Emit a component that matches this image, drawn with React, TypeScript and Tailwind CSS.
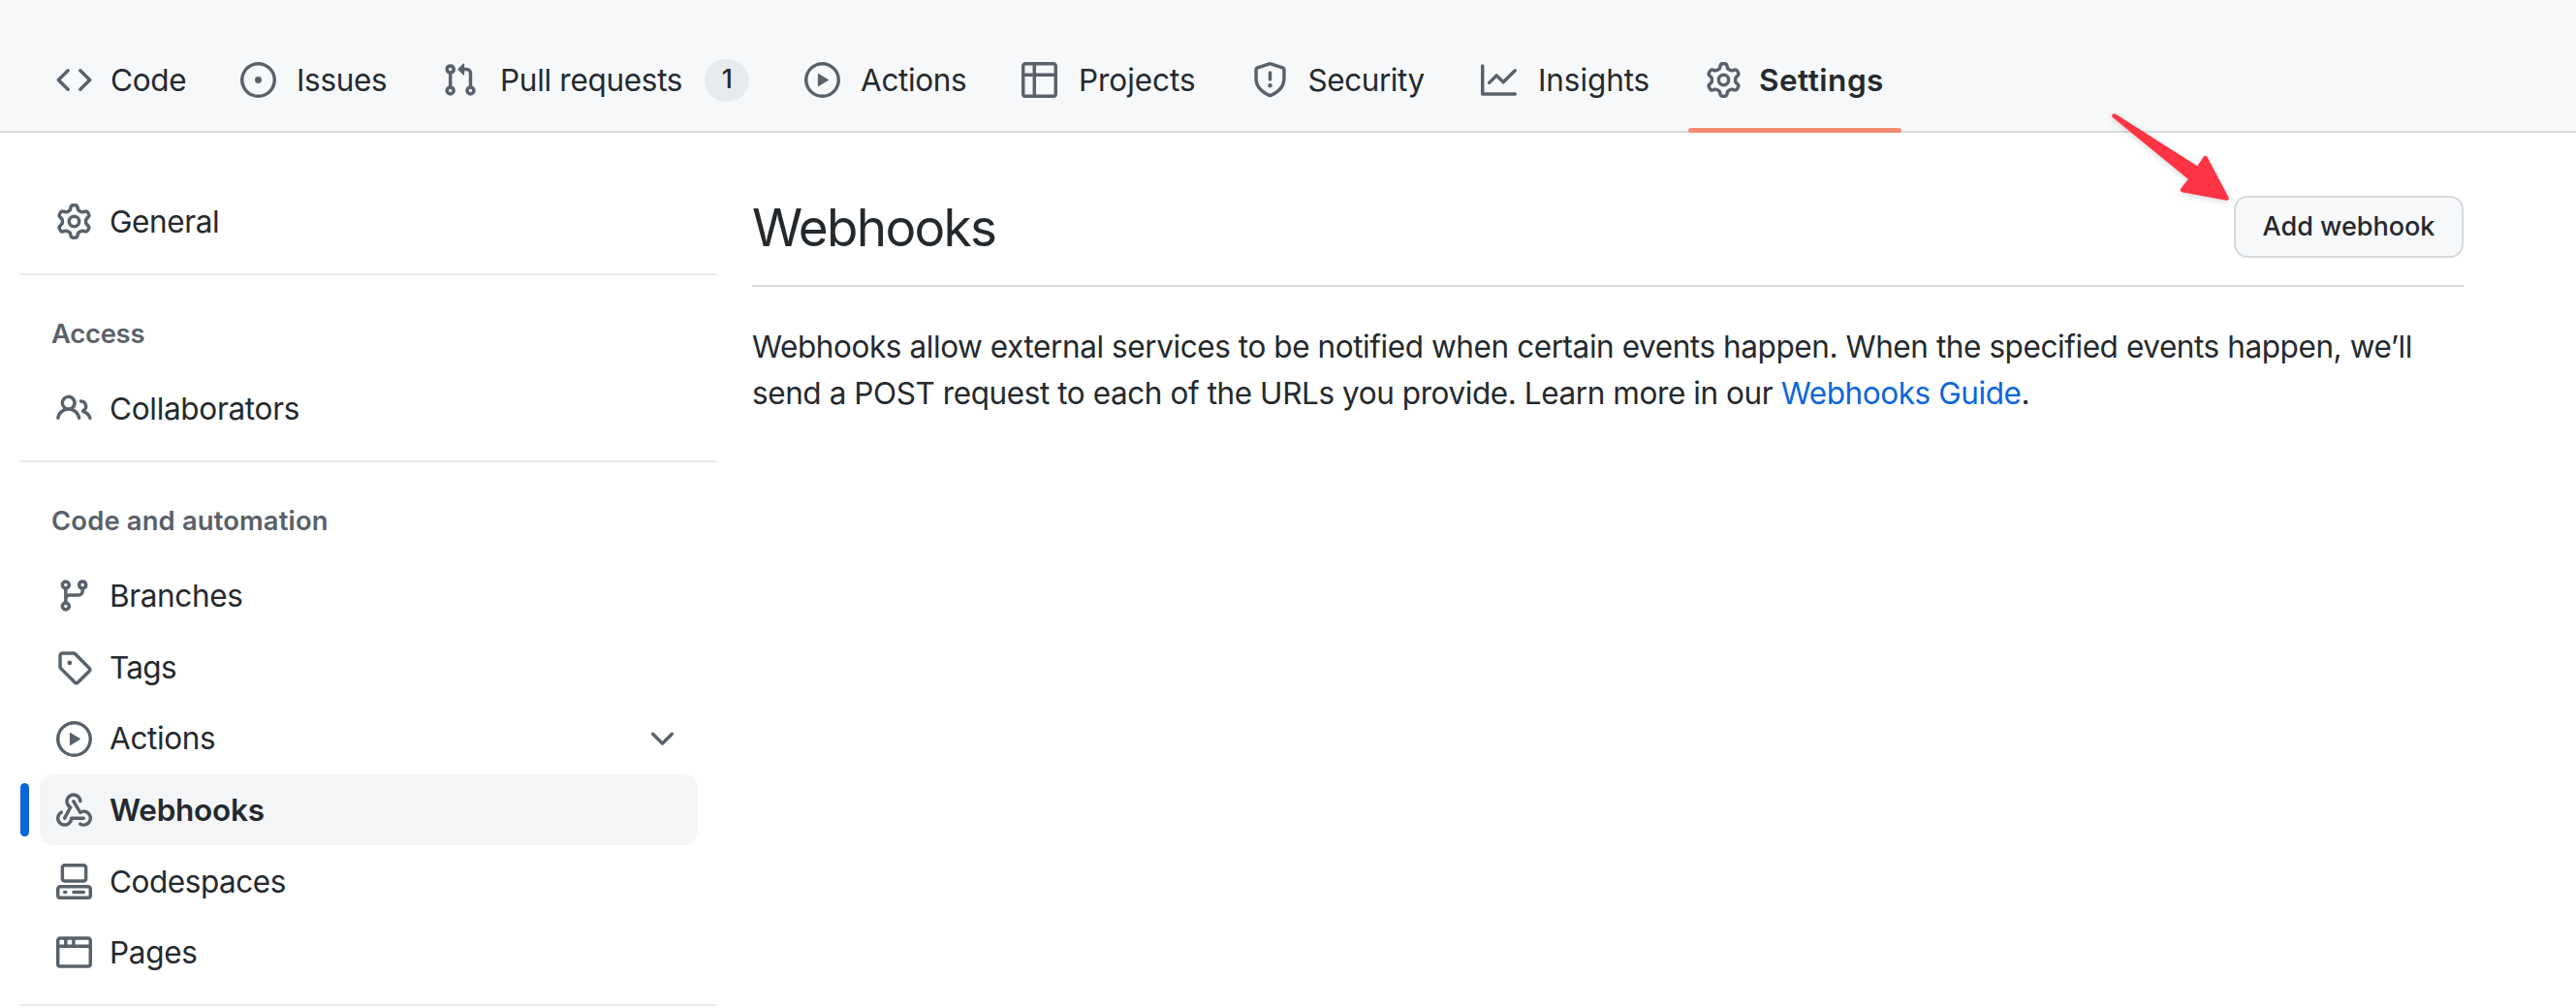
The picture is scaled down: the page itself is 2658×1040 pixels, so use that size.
const ICONS = {
  code: 'm11.28 3.22 4.25 4.25a.75.75 0 0 1 0 1.06l-4.25 4.25a.749.749 0 0 1-1.275-.326.749.749 0 0 1 .215-.734L13.94 8l-3.72-3.72a.749.749 0 0 1 .326-1.275.749.749 0 0 1 .734.215Zm-6.56 0a.751.751 0 0 1 1.042.018.751.751 0 0 1 .018 1.042L2.06 8l3.72 3.72a.749.749 0 0 1-.326 1.275.749.749 0 0 1-.734-.215L.47 8.53a.75.75 0 0 1 0-1.06Z',
  issue: 'M8 9.5a1.5 1.5 0 1 0 0-3 1.5 1.5 0 0 0 0 3ZM8 0a8 8 0 1 1 0 16A8 8 0 0 1 8 0ZM1.5 8a6.5 6.5 0 1 0 13 0 6.5 6.5 0 0 0-13 0Z',
  pull: 'M1.5 3.25a2.25 2.25 0 1 1 3 2.122v5.256a2.251 2.251 0 1 1-1.5 0V5.372A2.25 2.25 0 0 1 1.5 3.25Zm5.677-.177L9.573.677A.25.25 0 0 1 10 .854V2.5h1A2.5 2.5 0 0 1 13.5 5v5.628a2.251 2.251 0 1 1-1.5 0V5a1 1 0 0 0-1-1h-1v1.646a.25.25 0 0 1-.427.177L7.177 3.427a.25.25 0 0 1 0-.354ZM3.75 2.5a.75.75 0 1 0 0 1.5.75.75 0 0 0 0-1.5Zm0 9.5a.75.75 0 1 0 0 1.5.75.75 0 0 0 0-1.5Zm8.25.75a.75.75 0 1 0 1.5 0 .75.75 0 0 0-1.5 0Z',
  play: 'M8 0a8 8 0 1 1 0 16A8 8 0 0 1 8 0ZM1.5 8a6.5 6.5 0 1 0 13 0 6.5 6.5 0 0 0-13 0Zm4.879-2.773 4.264 2.559a.25.25 0 0 1 0 .428l-4.264 2.559A.25.25 0 0 1 6 10.559V5.442a.25.25 0 0 1 .379-.215Z',
  table: 'M0 1.75C0 .784.784 0 1.75 0h12.5C15.216 0 16 .784 16 1.75v12.5A1.75 1.75 0 0 1 14.25 16H1.75A1.75 1.75 0 0 1 0 14.25ZM6.5 6.5v8h7.75a.25.25 0 0 0 .25-.25V6.5Zm8-1.5V1.75a.25.25 0 0 0-.25-.25H6.5V5Zm-13 1.5v7.75c0 .138.112.25.25.25H5v-8ZM5 5V1.5H1.75a.25.25 0 0 0-.25.25V5Z',
  shield: 'M7.467.133a1.748 1.748 0 0 1 1.066 0l5.25 1.68A1.75 1.75 0 0 1 15 3.48V7c0 1.566-.32 3.182-1.303 4.682-.983 1.498-2.585 2.813-5.032 3.855a1.697 1.697 0 0 1-1.33 0c-2.447-1.042-4.049-2.357-5.032-3.855C1.32 10.182 1 8.566 1 7V3.48a1.75 1.75 0 0 1 1.217-1.667Zm.61 1.429a.25.25 0 0 0-.153 0l-5.25 1.68a.25.25 0 0 0-.174.238V7c0 1.358.275 2.666 1.057 3.86.784 1.194 2.121 2.34 4.366 3.297a.196.196 0 0 0 .154 0c2.245-.956 3.582-2.104 4.366-3.298C13.225 9.666 13.5 8.36 13.5 7V3.48a.251.251 0 0 0-.174-.237l-5.25-1.68ZM8.75 4.75v3a.75.75 0 0 1-1.5 0v-3a.75.75 0 0 1 1.5 0ZM9 10.5a1 1 0 1 1-2 0 1 1 0 0 1 2 0Z',
  graph: 'M1.5 1.75V13.5h13.75a.75.75 0 0 1 0 1.5H.75a.75.75 0 0 1-.75-.75V1.75a.75.75 0 0 1 1.5 0Zm14.28 2.53-5.25 5.25a.75.75 0 0 1-1.06 0L7 7.06 4.28 9.78a.751.751 0 0 1-1.042-.018.751.751 0 0 1-.018-1.042l3.25-3.25a.75.75 0 0 1 1.06 0L10 7.94l4.72-4.72a.751.751 0 0 1 1.042.018.751.751 0 0 1 .018 1.042Z',
  gear: 'M8 0a8.2 8.2 0 0 1 .701.031C9.444.095 9.99.645 10.16 1.29l.288 1.107c.018.066.079.158.212.224.231.114.454.243.668.386.123.082.233.09.299.071l1.103-.303c.644-.176 1.392.021 1.82.63.27.385.506.792.704 1.218.315.675.111 1.422-.364 1.891l-.814.806c-.049.048-.098.147-.088.294.016.257.016.515 0 .772-.01.147.038.246.088.294l.814.806c.475.469.679 1.216.364 1.891a7.977 7.977 0 0 1-.704 1.217c-.428.61-1.176.807-1.82.63l-1.102-.302c-.067-.019-.177-.011-.3.071a5.909 5.909 0 0 1-.668.386c-.133.066-.194.158-.211.224l-.29 1.106c-.168.646-.715 1.196-1.458 1.26a8.006 8.006 0 0 1-1.402 0c-.743-.064-1.289-.614-1.458-1.26l-.289-1.106c-.018-.066-.079-.158-.212-.224a5.738 5.738 0 0 1-.668-.386c-.123-.082-.233-.09-.299-.071l-1.103.303c-.644.176-1.392-.021-1.82-.63a8.12 8.12 0 0 1-.704-1.218c-.315-.675-.111-1.422.363-1.891l.815-.806c.05-.048.098-.147.088-.294a6.214 6.214 0 0 1 0-.772c.01-.147-.038-.246-.088-.294l-.815-.806C.635 6.045.431 5.298.746 4.623a7.92 7.92 0 0 1 .704-1.217c.428-.61 1.176-.807 1.82-.63l1.102.302c.067.019.177.011.3-.071.214-.143.437-.272.668-.386.133-.066.194-.158.211-.224l.29-1.106C6.009.645 6.556.095 7.299.03 7.53.01 7.764 0 8 0Zm-.571 1.525c-.036.003-.108.036-.137.146l-.289 1.105c-.147.561-.549.967-.998 1.189-.173.086-.34.183-.5.29-.417.278-.97.423-1.529.27l-1.103-.303c-.109-.03-.175.016-.195.045-.22.312-.412.644-.573.99-.014.031-.021.11.059.19l.815.806c.411.406.562.957.53 1.456a4.709 4.709 0 0 0 0 .582c.032.499-.119 1.05-.53 1.456l-.815.806c-.081.08-.073.159-.059.19.162.346.353.677.573.989.02.03.085.076.195.046l1.102-.303c.56-.153 1.113-.008 1.53.27.161.107.328.204.501.29.447.222.85.629.997 1.189l.289 1.105c.029.109.101.143.137.146a6.6 6.6 0 0 0 1.142 0c.036-.003.108-.036.137-.146l.289-1.105c.147-.561.549-.967.998-1.189.173-.086.34-.183.5-.29.417-.278.97-.423 1.529-.27l1.103.303c.109.029.175-.016.195-.045.22-.313.411-.644.573-.99.014-.031.021-.11-.059-.19l-.815-.806c-.411-.406-.562-.957-.53-1.456a4.709 4.709 0 0 0 0-.582c-.032-.499.119-1.05.53-1.456l.815-.806c.081-.08.073-.159.059-.19a6.464 6.464 0 0 0-.573-.989c-.02-.03-.085-.076-.195-.046l-1.102.303c-.56.153-1.113.008-1.53-.27a4.44 4.44 0 0 0-.501-.29c-.447-.222-.85-.629-.997-1.189l-.289-1.105c-.029-.11-.101-.143-.137-.146a6.6 6.6 0 0 0-1.142 0ZM11 8a3 3 0 1 1-6 0 3 3 0 0 1 6 0ZM9.5 8a1.5 1.5 0 1 0-3.001.001A1.5 1.5 0 0 0 9.5 8Z',
  people: 'M2 5.5a3.5 3.5 0 1 1 5.898 2.549 5.508 5.508 0 0 1 3.034 4.084.75.75 0 1 1-1.482.235 4 4 0 0 0-7.9 0 .75.75 0 0 1-1.482-.236A5.507 5.507 0 0 1 3.102 8.05 3.493 3.493 0 0 1 2 5.5ZM11 4a3.001 3.001 0 0 1 2.22 5.018 5.01 5.01 0 0 1 2.56 3.012.749.749 0 0 1-.885.954.752.752 0 0 1-.549-.514 3.507 3.507 0 0 0-2.522-2.372.75.75 0 0 1-.574-.73v-.352a.75.75 0 0 1 .416-.672A1.5 1.5 0 0 0 11 5.5.75.75 0 0 1 11 4Zm-5.5-.5a2 2 0 1 0-.001 3.999A2 2 0 0 0 5.5 3.5Z',
  branch: 'M9.5 3.25a2.25 2.25 0 1 1 3 2.122V6A2.5 2.5 0 0 1 10 8.5H6a1 1 0 0 0-1 1v1.128a2.251 2.251 0 1 1-1.5 0V5.372a2.25 2.25 0 1 1 1.5 0v1.836A2.493 2.493 0 0 1 6 7h4a1 1 0 0 0 1-1v-.628A2.25 2.25 0 0 1 9.5 3.25Zm-6 0a.75.75 0 1 0 1.5 0 .75.75 0 0 0-1.5 0Zm8.25-.75a.75.75 0 1 0 0 1.5.75.75 0 0 0 0-1.5ZM4.25 12a.75.75 0 1 0 0 1.5.75.75 0 0 0 0-1.5Z',
  tag: 'M1 7.775V2.75C1 1.784 1.784 1 2.75 1h5.025c.464 0 .91.184 1.238.513l6.25 6.25a1.75 1.75 0 0 1 0 2.474l-5.026 5.026a1.75 1.75 0 0 1-2.474 0l-6.25-6.25A1.752 1.752 0 0 1 1 7.775Zm1.5 0c0 .066.026.13.073.177l6.25 6.25a.25.25 0 0 0 .354 0l5.025-5.025a.25.25 0 0 0 0-.354l-6.25-6.25a.25.25 0 0 0-.177-.073H2.75a.25.25 0 0 0-.25.25ZM6 5a1 1 0 1 1 0 2 1 1 0 0 1 0-2Z',
  webhook: 'M5.5 4.25a2.25 2.25 0 0 1 4.5 0 .75.75 0 0 0 1.5 0 3.75 3.75 0 1 0-6.14 2.889l-2.272 4.258a.75.75 0 0 0 1.324.706L7 7.25a.75.75 0 0 0-.309-1.015A2.25 2.25 0 0 1 5.5 4.25ZM7.364 3.607a.75.75 0 0 1 1.03.257l2.608 4.349a3.75 3.75 0 1 1-.628 6.785.75.75 0 0 1 .752-1.299 2.25 2.25 0 1 0-.033-3.88.75.75 0 0 1-1.03-.256L7.107 4.636a.75.75 0 0 1 .257-1.03ZM2.9 8.776A.75.75 0 0 1 2.625 9.8 2.25 2.25 0 1 0 6 11.75a.75.75 0 0 1 .75-.751h5.5a.75.75 0 0 1 0 1.5H7.425a3.751 3.751 0 1 1-5.55-3.998.75.75 0 0 1 1.024.274Z',
  codespaces: 'M0 11.25c0-.966.784-1.75 1.75-1.75h12.5c.966 0 1.75.784 1.75 1.75v3A1.75 1.75 0 0 1 14.25 16H1.75A1.75 1.75 0 0 1 0 14.25Zm2-9.5C2 .784 2.784 0 3.75 0h8.5C13.216 0 14 .784 14 1.75v5a1.75 1.75 0 0 1-1.75 1.75h-8.5A1.75 1.75 0 0 1 2 6.75Zm1.75-.25a.25.25 0 0 0-.25.25v5c0 .138.112.25.25.25h8.5a.25.25 0 0 0 .25-.25v-5a.25.25 0 0 0-.25-.25Zm-2 9.5a.25.25 0 0 0-.25.25v3c0 .138.112.25.25.25h12.5a.25.25 0 0 0 .25-.25v-3a.25.25 0 0 0-.25-.25ZM7 12.75a.75.75 0 0 1 .75-.75h4.5a.75.75 0 0 1 0 1.5h-4.5a.75.75 0 0 1-.75-.75Zm-4 0a.75.75 0 0 1 .75-.75h.5a.75.75 0 0 1 0 1.5h-.5a.75.75 0 0 1-.75-.75Z',
  browser: 'M0 2.75C0 1.784.784 1 1.75 1h12.5c.966 0 1.75.784 1.75 1.75v10.5A1.75 1.75 0 0 1 14.25 15H1.75A1.75 1.75 0 0 1 0 13.25ZM14.5 6h-13v7.25c0 .138.112.25.25.25h12.5a.25.25 0 0 0 .25-.25Zm-6-3.5v2h6V2.75a.25.25 0 0 0-.25-.25ZM5 2.5v2h2v-2Zm-3.25 0a.25.25 0 0 0-.25.25V4.5h2v-2Z',
  chevron: 'M12.78 5.22a.749.749 0 0 1 0 1.06l-4.25 4.25a.749.749 0 0 1-1.06 0L3.22 6.28a.749.749 0 1 1 1.06-1.06L8 8.939l3.72-3.719a.749.749 0 0 1 1.06 0Z',
};

type IconName = keyof typeof ICONS;

function Icon({ name }: { name: IconName }) {
  return (
    <svg viewBox="0 0 16 16" className="size-[37px] shrink-0 fill-[#59616a]" aria-hidden="true">
      <path d={ICONS[name]} />
    </svg>
  );
}

type Tab = { label: string; icon: IconName; layout: string; count?: number; active?: boolean };

const TABS: Tab[] = [
  { label: 'Code', icon: 'code', layout: 'w-[190px] gap-[19px] tracking-[-0.3px]' },
  { label: 'Issues', icon: 'issue', layout: 'w-[208px] gap-[21px] tracking-[-0.35px]' },
  { label: 'Pull requests', icon: 'pull', layout: 'w-[374px] gap-[23px] tracking-[-0.3px]', count: 1 },
  { label: 'Actions', icon: 'play', layout: 'w-[223.5px] gap-[21px] tracking-[-0.35px]' },
  { label: 'Projects', icon: 'table', layout: 'w-[238px] gap-[22.5px] tracking-[-0.05px]' },
  { label: 'Security', icon: 'shield', layout: 'w-[236.5px] gap-[21px] tracking-[-0.45px]' },
  { label: 'Insights', icon: 'graph', layout: 'w-[232px] gap-[22px] tracking-[-0.1px]' },
  { label: 'Settings', icon: 'gear', layout: 'gap-[18px] tracking-[0.5px]', active: true },
];

function TabItem({ tab }: { tab: Tab }) {
  return (
    <a className={`relative flex h-full shrink-0 items-center ${tab.layout} ${tab.active ? 'font-semibold' : ''}`}>
      <Icon name={tab.icon} />
      <span className="pt-0.5">{tab.label}</span>
      {tab.count !== undefined && (
        <span className="flex h-11 w-[46px] items-center justify-center rounded-full bg-[#e8ebed] text-[27px] font-medium">
          {tab.count}
        </span>
      )}
      {tab.active && <span className="absolute -right-[18px] -bottom-[27px] -left-[18px] h-[5px] rounded-full bg-[#f78b74]" />}
    </a>
  );
}

type NavItem = { label: string; icon: IconName; tracking: string; expandable?: boolean; active?: boolean };

function SideItem({ item }: { item: NavItem }) {
  return (
    <li className="relative flex h-[73.6px] pl-[41px]">
      {item.active && <span className="absolute top-[9px] left-[21px] h-[55px] w-[9px] rounded-full bg-[#0a66da]" />}
      <a
        className={`flex h-[73px] w-[679px] items-center gap-[18px] rounded-[14px] pr-[18px] pl-[17px] ${item.tracking} ${
          item.active ? 'bg-[#f3f5f7] font-semibold' : ''
        }`}
      >
        <Icon name={item.icon} />
        <span className="flex-1 pt-px">{item.label}</span>
        {item.expandable && <Icon name="chevron" />}
      </a>
    </li>
  );
}

const AUTOMATION: NavItem[] = [
  { label: 'Branches', icon: 'branch', tracking: 'tracking-[-0.35px]' },
  { label: 'Tags', icon: 'tag', tracking: 'tracking-[-0.7px]' },
  { label: 'Actions', icon: 'play', tracking: 'tracking-[-0.35px]', expandable: true },
  { label: 'Webhooks', icon: 'webhook', tracking: 'tracking-[-0.25px]', active: true },
  { label: 'Codespaces', icon: 'codespaces', tracking: 'tracking-[-0.45px]' },
  { label: 'Pages', icon: 'browser', tracking: 'tracking-[-0.3px]' },
];

function Divider() {
  return <hr className="ml-[21px] h-[2px] w-[718px] border-0 bg-[#e6e9ec]" />;
}

export default function App() {
  return (
    <div className="relative h-[1040px] w-[2658px] overflow-hidden bg-white font-[Inter,sans-serif] text-[31.5px] leading-[48.4px] text-[#24292e]">
      <header className="h-[137px] border-b-2 border-[#d8dbdf] bg-[#f6f8fa] pt-[55px] pl-[58px]">
        <nav className="flex h-[55px]">
          {TABS.map((tab) => (
            <TabItem key={tab.label} tab={tab} />
          ))}
        </nav>
      </header>

      <div className="flex">
        <aside className="w-[776px] shrink-0 pt-[55px]">
          <ul>
            <SideItem item={{ label: 'General', icon: 'gear', tracking: 'tracking-[-0.4px]' }} />
          </ul>
          <div className="pt-[16.4px]">
            <Divider />
          </div>
          <h3 className="pt-[36px] pl-[53px] text-[27.4px] font-semibold tracking-[-0.25px] text-[#59616a]">Access</h3>
          <ul className="pt-[16.6px]">
            <SideItem item={{ label: 'Collaborators', icon: 'people', tracking: 'tracking-[-0.3px]' }} />
          </ul>
          <div className="pt-[16.4px]">
            <Divider />
          </div>
          <h3 className="pt-[36px] pl-[53px] text-[27.4px] font-semibold tracking-[0.15px] text-[#59616a]">Code and automation</h3>
          <ul className="pt-[17.1px]">
            {AUTOMATION.map((item) => (
              <SideItem key={item.label} item={item} />
            ))}
          </ul>
          <div className="pt-[16.4px]">
            <Divider />
          </div>
        </aside>

        <main className="w-[1766px] pt-[65px]">
          <div className="flex h-[94px] items-start justify-between border-b-2 border-[#d8dbdf]">
            <h1 className="text-[53px] leading-[66px] tracking-[-1.7px]">Webhooks</h1>
            <button className="h-16 w-[237px] rounded-[14px] border-2 border-[#d6d9dc] bg-[#f6f8fa] text-[27px] font-medium">
              Add webhook
            </button>
          </div>
          <p className="pt-[38px] tracking-[-0.42px] whitespace-nowrap">
            Webhooks allow external services to be notified when certain events happen. When the specified events happen, we’ll
            <br />
            send a POST request to each of the URLs you provide. Learn more in our{' '}
            <a className="text-[#0b66d9]">Webhooks Guide</a>.
          </p>
        </main>
      </div>

      <svg
        viewBox="0 0 160 120"
        className="absolute top-[100px] left-[2160px] h-[120px] w-[160px] fill-[#ff3444] stroke-[#ff3444] drop-shadow-[0_2px_3px_rgba(0,0,0,0.15)]"
        aria-hidden="true"
      >
        <path d="M21.5 19.5 108 74.5 115.5 63 137.5 104.5 92 96 101 84.5Z" strokeWidth="4.5" strokeLinejoin="round" />
      </svg>
    </div>
  );
}
